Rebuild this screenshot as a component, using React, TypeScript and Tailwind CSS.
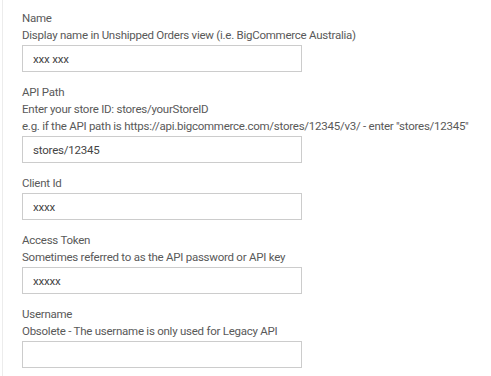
const FIELDS = [
  {
    label: 'Name',
    help: ['Display name in Unshipped Orders view (i.e. BigCommerce Australia)'],
    value: 'xxx xxx',
  },
  {
    label: 'API Path',
    help: [
      'Enter your store ID: stores/yourStoreID',
      'e.g. if the API path is https://api.bigcommerce.com/stores/12345/v3/ - enter "stores/12345"',
    ],
    value: 'stores/12345',
  },
  { label: 'Client Id', help: [], value: 'xxxx' },
  {
    label: 'Access Token',
    help: ['Sometimes referred to as the API password or API key'],
    value: 'xxxxx',
  },
  {
    label: 'Username',
    help: ['Obsolete - The username is only used for Legacy API'],
    value: '',
  },
];

export default function App() {
  return (
    <div className="h-[376px] w-full overflow-hidden bg-white pl-[2px]">
      <div
        className="flex h-full flex-col gap-[12px] border-l border-[#ececec] pl-[19px] pt-[10px] text-[11.5px] leading-[17px] tracking-[-0.25px] text-[#595959]"
        style={{ fontFamily: 'Roboto, "Liberation Sans", sans-serif' }}
      >
        {FIELDS.map((field) => (
          <div key={field.label} className="flex flex-col">
            <div>{field.label}</div>
            {field.help.map((line) => (
              <div key={line} className="whitespace-nowrap">
                {line}
              </div>
            ))}
            <input
              readOnly
              defaultValue={field.value}
              className="mt-[1px] h-[27px] w-[280px] border border-[#cccccc] bg-white px-[10px] text-[11.5px] tracking-[-0.2px] text-[#444] outline-none"
            />
          </div>
        ))}
      </div>
    </div>
  );
}
